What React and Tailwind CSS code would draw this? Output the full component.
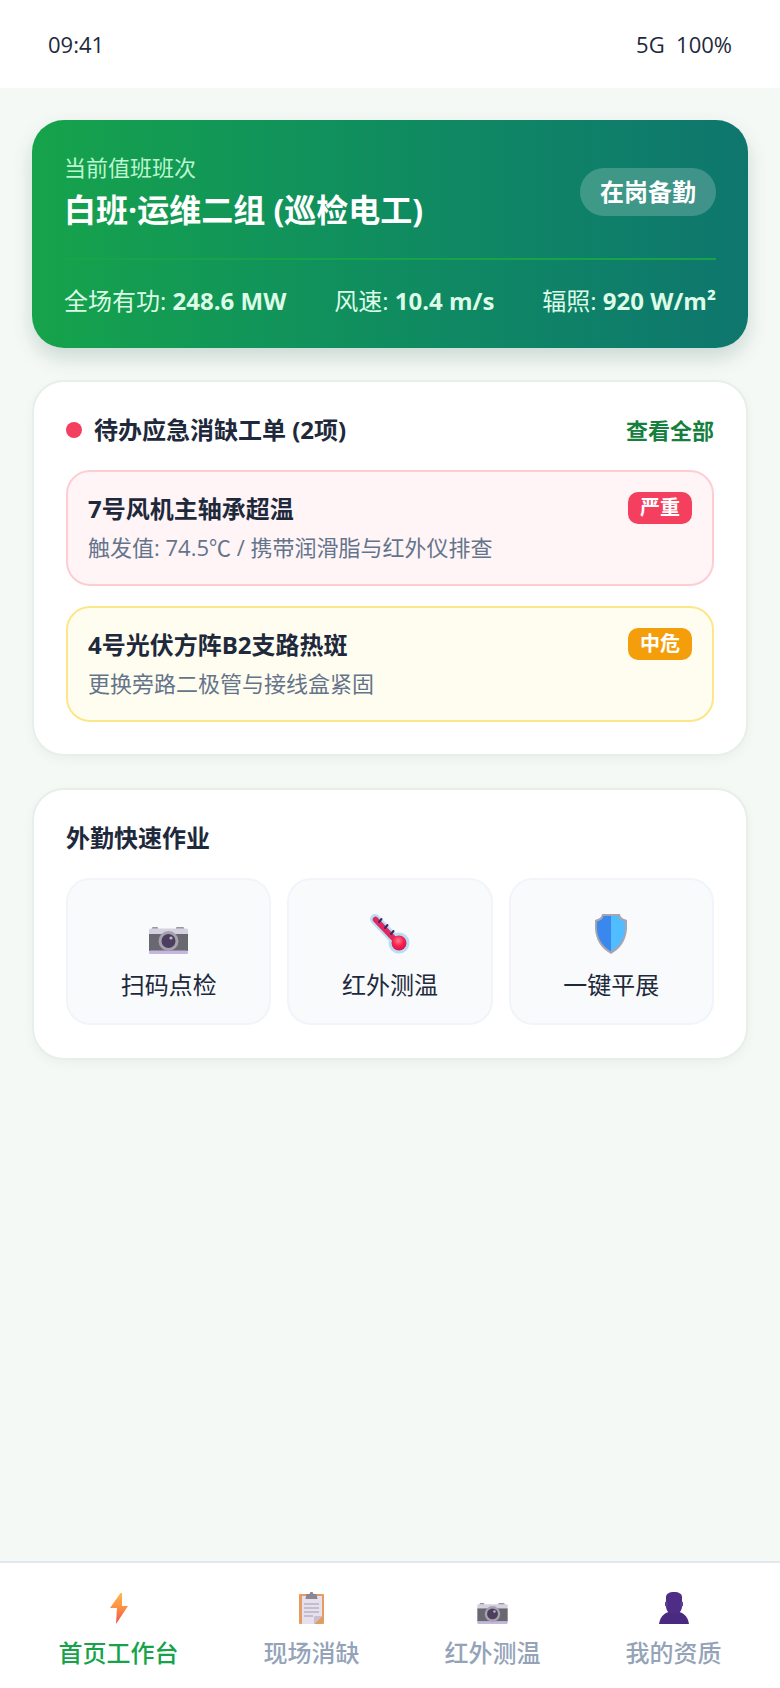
import { useId } from 'react'

function CameraIcon({ className }) {
  return (
    <svg viewBox="0 0 39 27" className={className}>
      <rect x="3" y="0" width="6" height="3" rx="1" fill="#9a96a0" />
      <rect x="27" y="0" width="8" height="3" rx="1" fill="#9a96a0" />
      <rect x="0" y="1.500" width="39" height="7" rx="1.500" fill="#d6d1e0" />
      <rect x="0" y="7" width="39" height="17" fill="#69676f" />
      <rect x="0" y="23.500" width="39" height="3.500" rx="1.500" fill="#c4b6dc" />
      <circle cx="19.500" cy="14" r="10" fill="#a5a1ad" />
      <circle cx="19.500" cy="14" r="7" fill="#4b3e5e" />
      <circle cx="22" cy="11" r="1.600" fill="#bdb6ca" />
    </svg>
  )
}

function ThermometerIcon({ className }) {
  const id = useId()
  return (
    <svg viewBox="0 0 40 40" className={className}>
      <defs>
        <radialGradient id={id} cx="0.45" cy="0.35" r="0.7">
          <stop offset="0" stopColor="#ff7a96" />
          <stop offset="0.5" stopColor="#f5234f" />
          <stop offset="1" stopColor="#d6104a" />
        </radialGradient>
      </defs>
      <path d="M5 5 L28 29" stroke="#b5def9" strokeWidth="10" strokeLinecap="round" />
      <circle cx="29" cy="29" r="10.500" fill="#b5def9" />
      <path d="M5.500 5.500 L27 28" stroke="#e0285f" strokeWidth="5.500" strokeLinecap="round" />
      <circle cx="29" cy="29" r="7.500" fill={`url(#${id})`} />
      <path d="M9 8 L11.500 5 M15 14 L17.500 11 M21 20 L23.500 17" stroke="#3d2a5c" strokeWidth="2" strokeLinecap="round" />
    </svg>
  )
}

function ShieldIcon({ className }) {
  return (
    <svg viewBox="0 0 32 40" className={className}>
      <path d="M7 0 H25 C25 3 28 5 32 6 C33 20 30 32 16 40 C2 32 -1 20 0 6 C4 5 7 3 7 0 Z" fill="#a8a4b2" />
      <path d="M8.500 2 H16 V37.500 C4 30 1 20 2 7.500 C5 7 8 5 8.500 2 Z" fill="#3a88ee" />
      <path d="M23.500 2 H16 V37.500 C28 30 31 20 30 7.500 C27 7 24 5 23.500 2 Z" fill="#4fbdff" />
    </svg>
  )
}

function BoltIcon({ className }) {
  const id = useId()
  return (
    <svg viewBox="0 0 18 31" className={className}>
      <defs>
        <linearGradient id={id} x1="0" y1="0" x2="0" y2="1">
          <stop offset="0" stopColor="#ffb74a" />
          <stop offset="0.5" stopColor="#ff8c42" />
          <stop offset="1" stopColor="#f04c4c" />
        </linearGradient>
      </defs>
      <path d="M10.500 0 L12 0 V13 H18 L6 31 L7 15 H0 Z" fill={`url(#${id})`} />
    </svg>
  )
}

function ClipboardIcon({ className }) {
  return (
    <svg viewBox="0 0 25 32" className={className}>
      <rect x="0" y="2" width="25" height="30" rx="1" fill="#e59c62" />
      <path d="M3 4 H23 V24 L15 32 H3 Z" fill="#e6e0ee" />
      <path d="M15 32 L23 24 H16 C15.400 24 15 24.400 15 25 Z" fill="#c8bfd2" />
      <path d="M7.500 2 H10.500 L11.500 0 H13.500 L14.500 2 H17.500 L18.500 7 H6.500 Z" fill="#8c8594" />
      <path d="M5 12 H20 M5 16 H20 M5 20 H20 M5 24 H14" stroke="#a29ba9" strokeWidth="1.200" />
    </svg>
  )
}

function PersonIcon({ className }) {
  return (
    <svg viewBox="0 0 30 32" className={className}>
      <path d="M0 32 C1 24 7 19 15 19 C23 19 29 24 30 32 Z" fill="#4a2a80" />
      <path d="M7 5 C7 2 10 0 15 0 C20 0 23 2 23 5 V14 C23 19 20 22 15 22 C10 22 7 19 7 14 Z" fill="#4f2d87" />
      <rect x="6" y="9.500" width="2.500" height="5" rx="1.200" fill="#5d4290" />
      <rect x="21.500" y="9.500" width="2.500" height="5" rx="1.200" fill="#5d4290" />
    </svg>
  )
}

function Order({ title, desc, badge, itemClass, badgeClass }) {
  return (
    <div className={`rounded-[24px] border-2 px-5 pt-5 pb-[21px] ${itemClass}`}>
      <div className="flex items-center justify-between">
        <div className="text-[24px] font-bold leading-[32px] text-[#1e293b]">{title}</div>
        <span className={`mb-[2px] rounded-[10px] px-3 text-[20px] font-bold leading-[32px] text-white ${badgeClass}`}>{badge}</span>
      </div>
      <div className="mt-[5px] text-[22px] leading-[32px] text-[#64748b]">{desc}</div>
    </div>
  )
}

function Tile({ icon, label }) {
  return (
    <div className="flex h-[147px] flex-col items-center rounded-[24px] border-2 border-[#f1f5f9] bg-[#f8fafc] pt-[30px]">
      <div className="flex h-[44px] items-end">{icon}</div>
      <div className="mt-[13px] text-[24px] leading-[36px] text-[#1e293b]">{label}</div>
    </div>
  )
}

function NavItem({ icon, label, active }) {
  return (
    <div className="flex flex-col items-center">
      <div className="flex h-[32px] items-end">{icon}</div>
      <div className={`mt-[11px] text-[24px] font-medium leading-[36px] ${active ? 'text-[#16a34a]' : 'text-[#94a3b8]'}`}>{label}</div>
    </div>
  )
}

export default function App() {
  return (
    <div className="flex h-[1688px] flex-col bg-[#f5f9f6] [font-family:'Open_Sans','Noto_Sans_CJK_SC',sans-serif]">
      <div className="flex h-[88px] shrink-0 items-center justify-between bg-white px-12 text-[22px] text-[#1e293b]">
        <span>09:41</span>
        <span className="whitespace-pre">5G  100%</span>
      </div>

      <div className="flex flex-1 flex-col gap-8 px-8 pt-8">
        <div className="rounded-[32px] bg-gradient-to-r from-[#16a34a] to-[#0f766e] px-8 pt-[33px] pb-[29px] text-white shadow-[0_10px_20px_rgba(15,80,60,0.18)]">
          <div className="flex items-center justify-between border-b-2 border-[#16a34a] pb-[26px]">
            <div>
              <div className="text-[22px] leading-[28px] text-[#bbf7d0]">当前值班班次</div>
              <div className="mt-[7px] text-[32px] font-bold leading-[44px]">白班·运维二组 (巡检电工)</div>
            </div>
            <span className="mb-[2px] rounded-full bg-white/20 px-5 text-[24px] font-bold leading-[48px]">在岗备勤</span>
          </div>
          <div className="mt-[23px] flex justify-between text-[24px] leading-[36px] text-[#dcfce7]">
            <span>全场有功: <b>248.6 MW</b></span>
            <span>风速: <b>10.4 m/s</b></span>
            <span>辐照: <b>920 W/m²</b></span>
          </div>
        </div>

        <div className="rounded-[32px] border-2 border-[#e6efe9] bg-white px-8 pt-[31px] pb-8 shadow-[0_4px_12px_rgba(0,0,0,0.04)]">
          <div className="flex items-center justify-between">
            <div className="flex items-center gap-3">
              <span className="h-4 w-4 rounded-full bg-[#f43f5e]" />
              <span className="text-[24px] font-bold leading-[34px] text-[#1e293b]">待办应急消缺工单 (2项)</span>
            </div>
            <span className="text-[22px] font-bold leading-[34px] text-[#15803d]">查看全部</span>
          </div>
          <div className="mt-[23px] flex flex-col gap-5">
            <Order
              title="7号风机主轴承超温"
              desc="触发值: 74.5℃ / 携带润滑脂与红外仪排查"
              badge="严重"
              itemClass="border-[#fecdd3] bg-[#fff5f7]"
              badgeClass="bg-[#f43f5e]"
            />
            <Order
              title="4号光伏方阵B2支路热斑"
              desc="更换旁路二极管与接线盒紧固"
              badge="中危"
              itemClass="border-[#fde68a] bg-[#fffdf0]"
              badgeClass="bg-[#f59e0b]"
            />
          </div>
        </div>

        <div className="rounded-[32px] border-2 border-[#e6efe9] bg-white px-8 pt-[31px] pb-[33px] shadow-[0_4px_12px_rgba(0,0,0,0.04)]">
          <div className="text-[24px] font-bold leading-[34px] text-[#1e293b]">外勤快速作业</div>
          <div className="mt-[23px] grid grid-cols-3 gap-4">
            <Tile icon={<CameraIcon className="h-[27px] w-[39px]" />} label="扫码点检" />
            <Tile icon={<ThermometerIcon className="h-[40px] w-[40px]" />} label="红外测温" />
            <Tile icon={<ShieldIcon className="h-[40px] w-[32px]" />} label="一键平展" />
          </div>
        </div>
      </div>

      <div className="flex h-[127px] shrink-0 justify-around border-t-2 border-[#e2e8f0] bg-white px-4 pt-[29px]">
        <NavItem active icon={<BoltIcon className="h-[31px] w-[18px]" />} label="首页工作台" />
        <NavItem icon={<ClipboardIcon className="h-[32px] w-[25px]" />} label="现场消缺" />
        <NavItem icon={<CameraIcon className="h-[21px] w-[31px]" />} label="红外测温" />
        <NavItem icon={<PersonIcon className="h-[32px] w-[30px]" />} label="我的资质" />
      </div>
    </div>
  )
}
